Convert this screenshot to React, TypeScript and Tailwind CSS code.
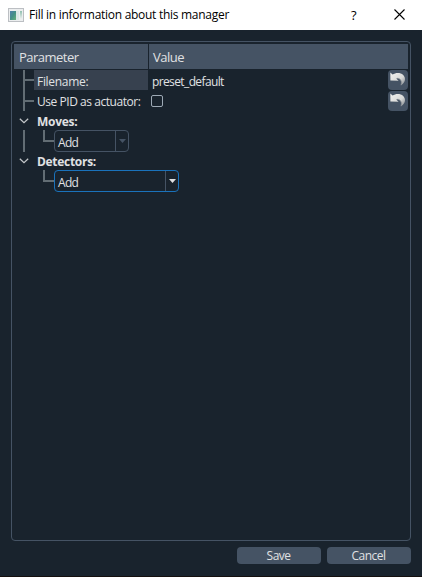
import type { ReactNode } from "react";

function WindowIcon() {
  return (
    <svg width="16" height="14" viewBox="0 0 16 14">
      <defs>
        <linearGradient id="pane" x1="0" y1="0" x2="1" y2="1">
          <stop offset="0" stopColor="#527fae" />
          <stop offset="0.5" stopColor="#458f87" />
          <stop offset="1" stopColor="#69b17b" />
        </linearGradient>
        <linearGradient id="side" x1="0" y1="0" x2="0" y2="1">
          <stop offset="0" stopColor="#8fbfae" />
          <stop offset="1" stopColor="#eef0f0" />
        </linearGradient>
      </defs>
      <rect x="0.5" y="0.5" width="15" height="13" fill="#eceeef" stroke="#bcbfc3" />
      <rect x="2" y="3" width="6" height="9" fill="url(#pane)" />
      <rect x="8" y="3" width="3" height="9" fill="#dce7e6" />
      <rect x="12" y="3" width="2" height="8" fill="url(#side)" />
    </svg>
  );
}

function ResetButton() {
  return (
    <button className="flex h-5 w-5 items-center justify-center rounded-[4px] bg-[#455364]">
      <svg width="16" height="16" viewBox="0 0 16 16">
        <defs>
          <linearGradient id="arrow" x1="0" y1="0" x2="1" y2="1">
            <stop offset="0" stopColor="#f2f2f0" />
            <stop offset="0.6" stopColor="#d8d9d7" />
            <stop offset="1" stopColor="#7d848b" />
          </linearGradient>
        </defs>
        <path
          d="M0.3 0.4 L2.6 2.6 C5.5 0.6 10.4 0.4 13.2 3 C16.2 6 15.4 10.6 11 13.2 C12.2 9.8 11 6.8 7.6 6.2 L6.2 6.4 L8.6 8.8 L0.4 8.6 Z"
          fill="url(#arrow)"
        />
        <path d="M7.6 6.2 C11 6.8 12.2 9.8 11 13.2" fill="none" stroke="#8d9297" strokeWidth="0.8" />
      </svg>
    </button>
  );
}

function Chevron() {
  return (
    <svg width="10" height="6" viewBox="0 0 10 6" fill="none">
      <path d="M0.8 0.8 L5 4.6 L9.2 0.8" stroke="#c4c7ca" strokeWidth="1.25" />
    </svg>
  );
}

function Branch({ label, active }: { label: string; active?: boolean }) {
  return (
    <div className="flex">
      <div className="flex w-[11px] flex-col">
        <div className="h-[10px] w-[2px] bg-[#626d74]" />
        <div className="h-[2px] w-full bg-[#626d74]" />
      </div>
      <div
        className={
          active
            ? "flex h-[22px] w-[125px] rounded-[4px] border border-[#1a72bb]"
            : "flex h-[22px] w-[75px] rounded-[4px] border border-[#455364]"
        }
      >
        <div className="flex-1 pl-[3px] leading-[23px] tracking-[-0.7px]">{label}</div>
        <div className="flex w-[13px] justify-center border-l border-[#455364] pt-[8px]">
          <svg width="7" height="4" viewBox="0 0 7 4">
            <path d="M0 0 H7 L3.5 4 Z" fill={active ? "#e0e1e3" : "#455364"} />
          </svg>
        </div>
      </div>
    </div>
  );
}

function Leaf({ children, className }: { children: ReactNode; className: string }) {
  return (
    <div className={"flex pl-[9px] " + className}>
      <div className="flex w-[11px] border-l-2 border-[#626d74] pt-[9px]">
        <div className="h-[2px] w-full bg-[#626d74]" />
      </div>
      {children}
    </div>
  );
}

export default function App() {
  return (
    <div className="flex h-[577px] w-[422px] flex-col overflow-hidden border-b border-[#15100f] bg-[#19232d] font-['Open_Sans','Noto_Sans',sans-serif] text-[12px] tracking-[-0.3px] text-[#e0e1e3]">
      <header className="flex h-[30px] shrink-0 items-center bg-white pl-2 text-black">
        <WindowIcon />
        <span className="ml-[5px] tracking-[-0.28px]">Fill in information about this manager</span>
        <span className="ml-auto w-[46px] pl-[3px] text-[13px] font-medium leading-[28px]">?</span>
        <svg className="mb-[2px] mr-[17px]" width="11" height="11" viewBox="0 0 11 11">
          <path d="M0.5 0.5 L10.5 10.5 M10.5 0.5 L0.5 10.5" stroke="#000" strokeWidth="1.1" />
        </svg>
      </header>

      <main className="mx-[11px] mt-[11px] h-[500px] shrink-0 rounded-[4px] border border-[#455364] p-[2px]">
        <div className="flex h-[25px] gap-px text-[13px] leading-[27px] tracking-[-0.52px]">
          <div className="w-[134px] bg-[#455364] pl-[5px]">Parameter</div>
          <div className="flex-1 bg-[#455364] pl-[4px]">Value</div>
        </div>

        <div className="mt-px flex h-[21px] items-start">
          <Leaf className="h-[21px]">
            <div className="h-5 w-[114px] bg-[#37414f] pl-[3px] leading-[23px]">Filename:</div>
          </Leaf>
          <div className="flex-1 pl-1 leading-[23px] tracking-[-0.62px]">preset_default</div>
          <ResetButton />
        </div>
        <div className="flex h-5 items-start">
          <Leaf className="h-5">
            <div className="w-[114px] whitespace-nowrap pl-[3px] leading-[22px] tracking-[-0.45px]">Use PID as actuator:</div>
          </Leaf>
          <div className="flex-1 pl-[3px] pt-[4px]">
            <div className="h-3 w-3 rounded-[2px] border border-[#9da9b5]" />
          </div>
          <ResetButton />
        </div>

        <div className="flex h-[19px] items-center pl-[5px]">
          <Chevron />
          <b className="relative top-px ml-2 leading-[19px]">Moves:</b>
        </div>
        <div className="flex h-[22px] pl-[9px]">
          <div className="w-5 border-l-2 border-[#626d74]" />
          <Branch label="Add" />
        </div>
        <div className="flex h-[18px] items-center pl-[5px]">
          <Chevron />
          <b className="relative top-px ml-2 leading-[18px]">Detectors:</b>
        </div>
        <div className="flex h-[22px] pl-[29px]">
          <Branch label="Add" active />
        </div>
      </main>

      <footer className="mr-[11px] mt-[6px] flex justify-end gap-[6px] tracking-[-0.55px]">
        <button className="h-[17px] w-[84px] rounded-[4px] bg-[#455364] pr-px leading-[17px]">Save</button>
        <button className="h-[17px] w-[84px] rounded-[4px] bg-[#455364] pr-px leading-[17px]">Cancel</button>
      </footer>
    </div>
  );
}
